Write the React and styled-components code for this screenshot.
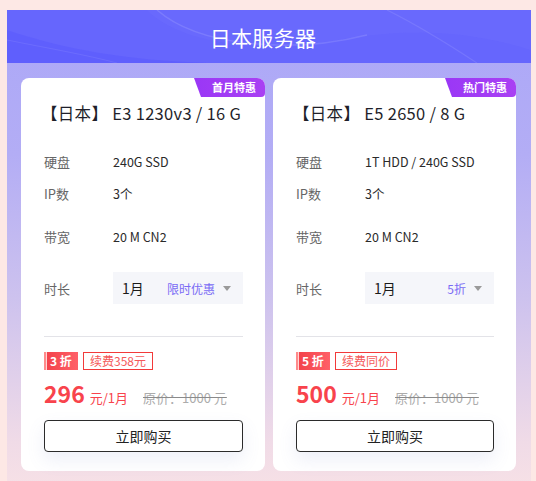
import React from "react";
import styled, { createGlobalStyle } from "styled-components";

const Global = createGlobalStyle`
  html, body { margin: 0; padding: 0; background: #fde8e5; }
  body { font-family: "Noto Sans CJK SC", "Noto Sans", sans-serif; overflow: hidden; }
  * { box-sizing: border-box; }
`;

const Page = styled.div`
  padding: 10px 5px 0 7px;
  height: 481px;
`;

const Panel = styled.section`
  width: 524px;
  height: 480px;
  background: linear-gradient(180deg, #aba7f8 0%, #b3adf5 30%, #cdc2ee 60%, #f0dbe7 90%, #f7e1e6 100%);
  display: flex;
  flex-direction: column;
`;

const Header = styled.header`
  position: relative;
  height: 53px;
  background: #6666fd;
  display: flex;
  align-items: center;
  justify-content: center;
  padding-right: 12px;
  overflow: hidden;
`;

const Waves = styled.svg`
  position: absolute;
  inset: 0;
  width: 100%;
  height: 100%;
`;

const Title = styled.h1`
  position: relative;
  margin: 0;
  color: #fff;
  font-size: 21px;
  font-weight: 400;
  letter-spacing: 0.3px;
`;

const Cards = styled.div`
  display: flex;
  gap: 8px;
  padding: 15px 15px 0 14px;
`;

const Card = styled.article`
  position: relative;
  width: ${(p) => p.$w}px;
  height: 393px;
  background: #fff;
  border-radius: 8px;
  padding: 23px 22px 0 23px;
  display: flex;
  flex-direction: column;
`;

const Badge = styled.div`
  position: absolute;
  top: 0;
  right: 0;
  width: 71px;
  height: 19px;
  background: linear-gradient(90deg, #9a37f6, #a940f3);
  border-radius: 0 8px 4px 0;
  clip-path: polygon(0 0, 100% 0, 100% 100%, 7px 100%);
  color: #fff;
  font-size: 11px;
  font-weight: 700;
  line-height: 19px;
  text-align: right;
  padding-right: 9px;
`;

const CardTitle = styled.h2`
  margin: 0 0 0 -3px;
  font-size: 16.5px;
  font-weight: 400;
  line-height: 24px;
  letter-spacing: 0.3px;
  color: #1f1f2a;
  white-space: nowrap;
`;

const Row = styled.div`
  display: flex;
  align-items: center;
  height: ${(p) => p.$h || 20}px;
  margin-top: ${(p) => p.$mt}px;
`;

const Label = styled.span`
  width: 69px;
  flex: none;
  font-size: 13px;
  color: #666;
`;

const Value = styled.span`
  font-size: 12.5px;
  color: #2a2a2a;
`;

const Select = styled.div`
  flex: 1;
  height: 32px;
  background: #f5f6fa;
  display: flex;
  align-items: center;
  padding: 0 12px 0 9px;
`;

const SelVal = styled.span`
  font-size: 14px;
  color: #1a1a1a;
  flex: 1;
`;

const SelHint = styled.span`
  font-size: 12px;
  color: #7a6cf5;
`;

const Caret = styled.span`
  width: 0;
  height: 0;
  margin-left: 8px;
  border-left: 4.5px solid transparent;
  border-right: 4.5px solid transparent;
  border-top: 5px solid #9a9a9a;
`;

const Divider = styled.hr`
  margin: 32px 0 0;
  border: 0;
  border-top: 1px solid #e3e3e8;
`;

const Tags = styled.div`
  display: flex;
  gap: 5px;
  margin-top: 15px;
  height: 18px;
`;

const Discount = styled.span`
  width: 34px;
  height: 18px;
  background: linear-gradient(90deg, #ff8b8b 0, #ff8b8b 2px, #ffd5d5 2px, #ffd5d5 3px, #f3434b 3px, #ff6068 100%);
  color: #fff;
  font-size: 12px;
  font-weight: 700;
  line-height: 18px;
  padding-left: 6px;
  white-space: nowrap;
`;

const Renew = styled.span`
  height: 18px;
  border: 1px solid #f23a3a;
  color: #f5595a;
  font-size: 12px;
  line-height: 16px;
  padding: 0 6px;
`;

const PriceRow = styled.div`
  display: flex;
  align-items: baseline;
  margin-top: 6px;
  height: 34px;
`;

const Price = styled.span`
  font-size: 23px;
  font-weight: 700;
  color: #f8434c;
`;

const Unit = styled.span`
  font-size: 13px;
  color: #f8434c;
  margin-left: 5px;
`;

const Orig = styled.span`
  font-size: 13px;
  color: #acacac;
  text-decoration: line-through;
  text-decoration-color: #8a8a8a;
  margin-left: 15px;
`;

const Buy = styled.button`
  margin-top: 10px;
  height: 32px;
  width: 100%;
  background: #fff;
  border: 1px solid #2b2b2b;
  border-radius: 4px;
  font-family: inherit;
  font-size: 14px;
  color: #222;
  box-shadow: 0 8px 18px rgba(110, 120, 200, 0.12);
  cursor: pointer;
`;

const cards = [
  {
    w: 244,
    badge: "首月特惠",
    title: "【日本】 E3 1230v3 / 16 G",
    disk: "240G SSD",
    hint: "限时优惠",
    off: "3 折",
    renew: "续费358元",
    price: "296",
  },
  {
    w: 243,
    badge: "热门特惠",
    title: "【日本】 E5 2650 / 8 G",
    disk: "1T HDD / 240G SSD",
    hint: "5折",
    off: "5 折",
    renew: "续费同价",
    price: "500",
  },
];

export default function App() {
  return (
    <>
      <Global />
      <Page>
        <Panel>
          <Header>
            <Waves viewBox="0 0 524 53" preserveAspectRatio="none">
              <path d="M0 20 C60 40 120 50 200 53 L0 53 Z" fill="rgba(80,80,255,0.3)" />
              <path d="M140 0 C170 30 240 45 330 30 C400 18 460 20 524 40 L524 0 Z" fill="rgba(120,120,255,0.2)" />
              <path d="M150 0 C190 35 280 45 360 25" stroke="rgba(255,255,255,0.12)" strokeWidth="1.5" fill="none" />
              <path d="M380 0 C420 20 450 40 470 53" stroke="rgba(255,255,255,0.1)" strokeWidth="1.2" fill="none" />
              <path d="M0 30 C40 38 80 45 110 53" stroke="rgba(255,255,255,0.08)" strokeWidth="1" fill="none" />
            </Waves>
            <Title>日本服务器</Title>
          </Header>
          <Cards>
            {cards.map((c) => (
              <Card key={c.title} $w={c.w}>
                <Badge>{c.badge}</Badge>
                <CardTitle>{c.title}</CardTitle>
                <Row $mt={26}>
                  <Label>硬盘</Label>
                  <Value>{c.disk}</Value>
                </Row>
                <Row $mt={12}>
                  <Label>IP数</Label>
                  <Value>3个</Value>
                </Row>
                <Row $mt={23}>
                  <Label>带宽</Label>
                  <Value>20 M CN2</Value>
                </Row>
                <Row $mt={26} $h={32}>
                  <Label>时长</Label>
                  <Select>
                    <SelVal>1月</SelVal>
                    <SelHint>{c.hint}</SelHint>
                    <Caret />
                  </Select>
                </Row>
                <Divider />
                <Tags>
                  <Discount>{c.off}</Discount>
                  <Renew>{c.renew}</Renew>
                </Tags>
                <PriceRow>
                  <Price>{c.price}</Price>
                  <Unit>元/1月</Unit>
                  <Orig>原价：1000 元</Orig>
                </PriceRow>
                <Buy>立即购买</Buy>
              </Card>
            ))}
          </Cards>
        </Panel>
      </Page>
    </>
  );
}
